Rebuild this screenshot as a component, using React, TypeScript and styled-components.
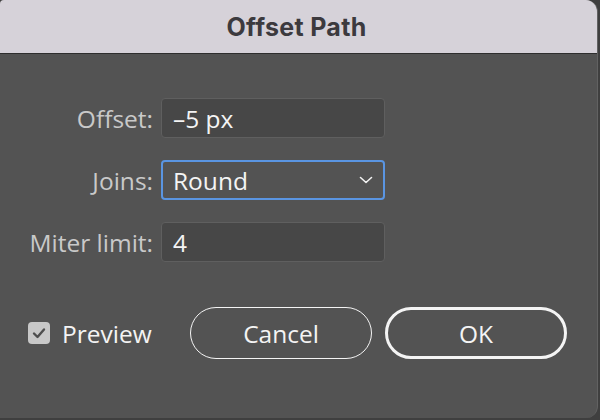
import { useState } from "react";
import styled, { createGlobalStyle } from "styled-components";

const GlobalStyle = createGlobalStyle`
  html, body {
    margin: 0;
    padding: 0;
    background: #3f3f3f;
  }
  * {
    box-sizing: border-box;
  }
`;

type Field = {
  key: string;
  label: string;
  value: string;
  kind: "input" | "select";
};

const FIELDS: Field[] = [
  { key: "offset", label: "Offset:", value: "–5 px", kind: "input" },
  { key: "joins", label: "Joins:", value: "Round", kind: "select" },
  { key: "miter", label: "Miter limit:", value: "4", kind: "input" },
];

function Chevron() {
  return (
    <svg width="14" height="8" viewBox="0 0 14 8" aria-hidden>
      <path d="M1.5 1.5 L7 6.5 L12.5 1.5" fill="none" stroke="#f2f2f2" strokeWidth="1.6" strokeLinecap="round" strokeLinejoin="round" />
    </svg>
  );
}

function CheckMark() {
  return (
    <svg width="14" height="12" viewBox="0 0 14 12" aria-hidden>
      <path d="M2 6.5 L5.5 10 L12 2.5" fill="none" stroke="#4e4e4e" strokeWidth="2.4" strokeLinecap="round" strokeLinejoin="round" />
    </svg>
  );
}

function App() {
  const [preview, setPreview] = useState(true);

  return (
    <Screen>
      <GlobalStyle />
      <Dialog>
        <TitleBar>
          <Title>Offset Path</Title>
        </TitleBar>
        <Body>
          <Form>
            {FIELDS.map((field) => (
              <Row key={field.key}>
                <Label>{field.label}</Label>
                <FieldBox $focused={field.kind === "select"}>
                  <FieldText>{field.value}</FieldText>
                  {field.kind === "select" && <Chevron />}
                </FieldBox>
              </Row>
            ))}
          </Form>
          <Footer>
            <CheckRow type="button" onClick={() => setPreview(!preview)}>
              <CheckBox>{preview && <CheckMark />}</CheckBox>
              <CheckLabel>Preview</CheckLabel>
            </CheckRow>
            <Buttons>
              <PillButton type="button">Cancel</PillButton>
              <PillButton type="button" $primary>
                OK
              </PillButton>
            </Buttons>
          </Footer>
        </Body>
      </Dialog>
    </Screen>
  );
}

const Screen = styled.div`
  width: 600px;
  height: 420px;
  overflow: hidden;
  background: #3f3f3f;
`;

const Dialog = styled.div`
  width: 598px;
  height: 418px;
  display: flex;
  flex-direction: column;
  background: #535353;
  border-radius: 4px 12px 12px 0;
  border-right: 1px solid #626262;
  overflow: hidden;
`;

const TitleBar = styled.div`
  height: 54px;
  flex-shrink: 0;
  display: flex;
  align-items: center;
  justify-content: center;
  background: #d6d2d9;
  border-bottom: 1px solid #2e2e2e;
  padding-right: 4px;
`;

const Title = styled.div`
  font-family: Inter, "Liberation Sans", sans-serif;
  font-weight: 700;
  font-size: 25px;
  color: #3c3a3e;
  letter-spacing: 0.3px;
  margin-top: 1px;
`;

const Body = styled.div`
  flex: 1;
  display: flex;
  flex-direction: column;
  padding: 44px 30px 0 28px;
`;

const Form = styled.div`
  display: flex;
  flex-direction: column;
  gap: 22px;
`;

const Row = styled.div`
  display: grid;
  grid-template-columns: 125px 224px;
  column-gap: 8px;
  align-items: center;
`;

const Label = styled.div`
  text-align: right;
  font-family: "Open Sans", "Noto Sans", sans-serif;
  font-size: 24.5px;
  color: #c9c9c9;
  white-space: nowrap;
`;

const FieldBox = styled.div<{ $focused?: boolean }>`
  height: 40px;
  display: flex;
  align-items: center;
  justify-content: space-between;
  padding: 0 ${(p) => (p.$focused ? "10px" : "11px")};
  border-radius: 4px;
  background: ${(p) => (p.$focused ? "#535353" : "#474747")};
  border: ${(p) => (p.$focused ? "2px solid #5a95e2" : "1px solid #5f5f5f")};
`;

const FieldText = styled.span`
  font-family: "Open Sans", "Noto Sans", sans-serif;
  font-size: 24.5px;
  color: #f4f4f4;
`;

const Footer = styled.div`
  margin-top: 45px;
  display: flex;
  align-items: center;
  justify-content: space-between;
`;

const CheckRow = styled.button`
  display: flex;
  align-items: center;
  gap: 12px;
  padding: 0;
  border: none;
  background: transparent;
  cursor: pointer;
`;

const CheckBox = styled.span`
  width: 22px;
  height: 22px;
  border-radius: 4px;
  background: #c8c8c8;
  display: flex;
  align-items: center;
  justify-content: center;
`;

const CheckLabel = styled.span`
  font-family: "Open Sans", "Noto Sans", sans-serif;
  font-size: 24.5px;
  color: #f4f4f4;
`;

const Buttons = styled.div`
  display: flex;
  gap: 13px;
`;

const PillButton = styled.button<{ $primary?: boolean }>`
  width: 182px;
  height: 52px;
  border-radius: 26px;
  background: transparent;
  border: ${(p) => (p.$primary ? "3px" : "1.5px")} solid #f4f4f4;
  font-family: "Open Sans", "Noto Sans", sans-serif;
  font-size: 24.5px;
  color: #f4f4f4;
  cursor: pointer;
`;

export default App;
